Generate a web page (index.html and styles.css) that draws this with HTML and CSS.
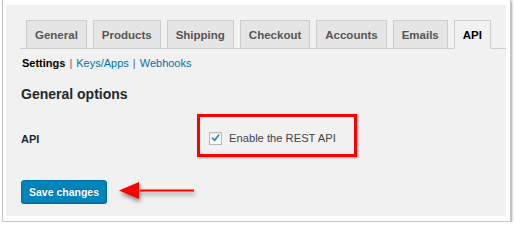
FILE: index.html
```html
<!DOCTYPE html>
<html>
<head>
<meta charset="utf-8">
<link rel="stylesheet" href="styles.css">
</head>
<body>
<div class="frame">
  <div class="panel">
    <nav class="tabs">
      <span class="tab">General</span>
      <span class="tab">Products</span>
      <span class="tab">Shipping</span>
      <span class="tab">Checkout</span>
      <span class="tab">Accounts</span>
      <span class="tab">Emails</span>
      <span class="tab active">API</span>
    </nav>
    <div class="subnav">
      <span class="current">Settings</span><span class="sep">|</span><a class="link">Keys/Apps</a><span class="sep">|</span><a class="link">Webhooks</a>
    </div>
    <h2 class="heading">General options</h2>
    <div class="row">
      <div class="label">API</div>
      <div class="field">
        <span class="checkbox"><svg viewBox="0 0 12 12" width="12" height="12"><path d="M2.6 6.2 L5 8.6 L9.6 2.8" fill="none" stroke="#1e8cbe" stroke-width="1.8" stroke-linecap="round" stroke-linejoin="round"/></svg></span>
        <span class="field-text">Enable the REST API</span>
      </div>
    </div>
    <div class="actions">
      <span class="button">Save changes</span>
      <svg class="arrow" viewBox="0 0 80 24" width="80" height="24"><path d="M22 10.6 L76 10.6 L76 12.6 L22 12.6 Z" fill="#f00"/><path d="M1 11.6 L21 3 L21 20 Z" fill="#f00"/></svg>
    </div>
  </div>
</div>
</body>
</html>
```

FILE: styles.css
```css
html, body {
  margin: 0;
  padding: 0;
  background: #ffffff;
}

body {
  font-family: "Liberation Sans", Arial, sans-serif;
}

.frame {
  margin-left: 2px;
  width: 509px;
  box-sizing: border-box;
  padding: 5px 4px 5px 3px;
  border: 1px solid #c4c4c4;
  border-top: none;
  background: #ffffff;
  box-shadow: 1px 1px 2px rgba(0, 0, 0, 0.35);
}

.panel {
  background: #f1f1f1;
  height: 211px;
  padding-top: 15px;
  box-sizing: border-box;
  display: flex;
  flex-direction: column;
}

.tabs {
  display: flex;
  align-items: flex-end;
  gap: 6px;
  margin-left: 14px;
  padding-left: 6px;
  height: 28px;
  border-bottom: 1px solid #cccccc;
}

.tab {
  box-sizing: border-box;
  height: 29px;
  margin-bottom: -1px;
  padding: 0 8px;
  display: flex;
  align-items: center;
  background: #e5e5e5;
  border: 1px solid #cccccc;
  color: #555555;
  font-size: 11.5px;
  font-weight: bold;
}

.tab.active {
  background: #f1f1f1;
  border-bottom-color: #f1f1f1;
  color: #000000;
}

.subnav {
  margin: 7px 0 0 16px;
  font-size: 11px;
  line-height: 15px;
  color: #555555;
}

.subnav .current {
  color: #000000;
  font-weight: bold;
}

.subnav .sep {
  color: #666666;
  margin: 0 4px;
}

.subnav .link {
  color: #0073aa;
}

.heading {
  margin: 14px 0 0 15px;
  font-size: 14px;
  line-height: 18px;
  font-weight: bold;
  color: #23282d;
}

.row {
  display: flex;
  align-items: flex-start;
  margin: 11px 0 0 15px;
}

.label {
  width: 176px;
  padding-top: 17px;
  font-size: 11px;
  line-height: 16px;
  font-weight: bold;
  color: #23282d;
}

.field {
  display: flex;
  align-items: center;
  height: 16px;
  padding: 13px 18px 8px 9px;
  border: 3px solid #ff0000;
  box-shadow: 1px 1px 2px rgba(0, 0, 0, 0.3);
}

.checkbox {
  box-sizing: border-box;
  width: 13px;
  height: 13px;
  display: flex;
  align-items: center;
  justify-content: center;
  background: #ffffff;
  border: 1px solid #b4b9be;
  box-shadow: inset 0 1px 2px rgba(0, 0, 0, 0.1);
}

.field-text {
  margin-left: 7px;
  font-size: 11.2px;
  color: #444444;
}

.actions {
  display: flex;
  align-items: center;
  margin: 23px 0 0 15px;
}

.button {
  box-sizing: border-box;
  height: 23px;
  width: 86px;
  display: flex;
  align-items: center;
  justify-content: center;
  background: #0085ba;
  border: 1px solid #0073aa;
  border-radius: 3px;
  box-shadow: 0 1px 0 #006799;
  color: #ffffff;
  font-size: 10.5px;
  font-weight: bold;
  text-shadow: 0 -1px 1px #006799;
}

.arrow {
  margin-left: 11px;
  margin-top: -1px;
  filter: drop-shadow(1px 3px 2px rgba(0, 0, 0, 0.45));
}
```
